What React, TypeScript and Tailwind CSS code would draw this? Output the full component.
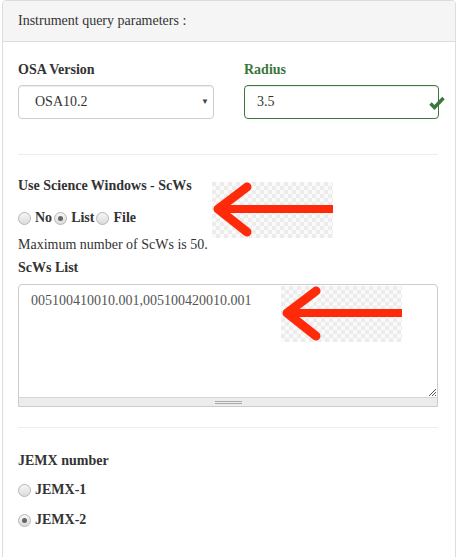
import React from 'react';

function Radio({ checked }: { checked?: boolean }) {
  return (
    <span className="inline-flex items-center justify-center w-[13px] h-[13px] rounded-full border border-[#b5b5b5] bg-gradient-to-b from-[#f6f6f6] to-[#dcdcdc] shrink-0">
      {checked && <span className="w-[5px] h-[5px] rounded-full bg-[#666]" />}
    </span>
  );
}

function Arrow({ className }: { className: string }) {
  // screenshot of an arrow pasted over the form, with a transparent (checkered) background
  return (
    <svg className={className} width="121" height="56" viewBox="0 0 121 56">
      <defs>
        <pattern id="chk" width="8" height="8" patternUnits="userSpaceOnUse">
          <rect width="8" height="8" fill="#fafafa" />
          <rect width="4" height="4" fill="#ececec" />
          <rect x="4" y="4" width="4" height="4" fill="#ececec" />
        </pattern>
      </defs>
      <rect width="121" height="56" fill="url(#chk)" />
      <path d="M121 27 H8" stroke="#ff2a0a" strokeWidth="8" />
      <path d="M35 5 L6 27 L35 50" stroke="#ff2a0a" strokeWidth="9" fill="none" strokeLinecap="round" strokeLinejoin="round" />
    </svg>
  );
}

export default function App() {
  return (
    <div className="w-[461px] h-[557px] bg-white overflow-hidden font-['Liberation_Serif',serif] text-[14px] leading-[20px] text-[#333]">
      <div className="relative ml-[2px] w-[454px] h-[600px] border border-[#ddd] rounded-t-[4px]">
        <div className="h-[41px] bg-[#f5f5f5] border-b border-[#ddd] px-[15px] flex items-center rounded-t-[3px]">
          Instrument query parameters :
        </div>

        <div className="pl-[15px] pr-[15px]">
          <div className="flex gap-[30px] pt-[18px]">
            <div className="w-[196px]">
              <div className="font-bold mb-[5px]">OSA Version</div>
              <div className="h-[34px] border border-[#ccc] rounded-[4px] flex items-center pl-[16px] pr-[4px] shadow-[inset_0_1px_1px_rgba(0,0,0,0.075)]">
                <span className="flex-1">OSA10.2</span>
                <span className="text-[8px] leading-none text-[#444]">▼</span>
              </div>
            </div>
            <div className="relative w-[195px]">
              <div className="font-bold text-[#3c763d] mb-[5px]">Radius</div>
              <div className="h-[34px] border border-[#3c763d] rounded-[4px] flex items-center pl-[12px] shadow-[inset_0_1px_1px_rgba(0,0,0,0.075)]">
                3.5
              </div>
              <svg className="absolute left-[185px] top-[36px]" width="16" height="14" viewBox="0 0 16 14">
                <path d="M1.5 7.5 L5.5 11.5 L14.5 2" stroke="#3c763d" strokeWidth="3.4" fill="none" strokeLinejoin="miter" />
              </svg>
            </div>
          </div>

          <div className="w-[420px] border-t border-[#eee] mt-[35px]" />

          <div className="font-bold mt-[21px]">Use Science Windows - ScWs</div>
          <div className="flex items-center mt-[12px] font-bold">
            <Radio />
            <span className="ml-[4px] mr-[2px]">No</span>
            <Radio checked />
            <span className="ml-[4px] mr-[2px]">List</span>
            <Radio />
            <span className="ml-[4px]">File</span>
          </div>
          <div className="mt-[7px]">Maximum number of ScWs is 50.</div>
          <div className="font-bold mt-[3px]">ScWs List</div>

          <div className="w-[420px] mt-[6px] border border-[#ccc] rounded-t-[4px]">
            <div className="relative h-[112px] px-[12px] pt-[6px] text-[#555]">
              005100410010.001,005100420010.001
              <svg className="absolute right-[1px] bottom-[1px]" width="8" height="8" viewBox="0 0 8 8">
                <path d="M1 8 L8 1 M4 8 L8 4 M7 8 L8 7" stroke="#555" strokeWidth="1" />
              </svg>
            </div>
            <div className="h-[9px] bg-[#ececec] border-t border-[#d6d6d6] flex flex-col items-center justify-center gap-[1px]">
              <span className="w-[27px] h-[1px] bg-[#aaa]" />
              <span className="w-[27px] h-[1px] bg-[#aaa]" />
            </div>
          </div>

          <div className="w-[420px] border-t border-[#eee] mt-[20px]" />

          <div className="font-bold mt-[23px]">JEMX number</div>
          <div className="flex items-center mt-[9px] font-bold">
            <Radio />
            <span className="ml-[4px]">JEMX-1</span>
          </div>
          <div className="flex items-center mt-[10px] font-bold">
            <Radio checked />
            <span className="ml-[4px]">JEMX-2</span>
          </div>
        </div>

        <Arrow className="absolute left-[209px] top-[181px]" />
        <Arrow className="absolute left-[278px] top-[285px]" />
      </div>
    </div>
  );
}
